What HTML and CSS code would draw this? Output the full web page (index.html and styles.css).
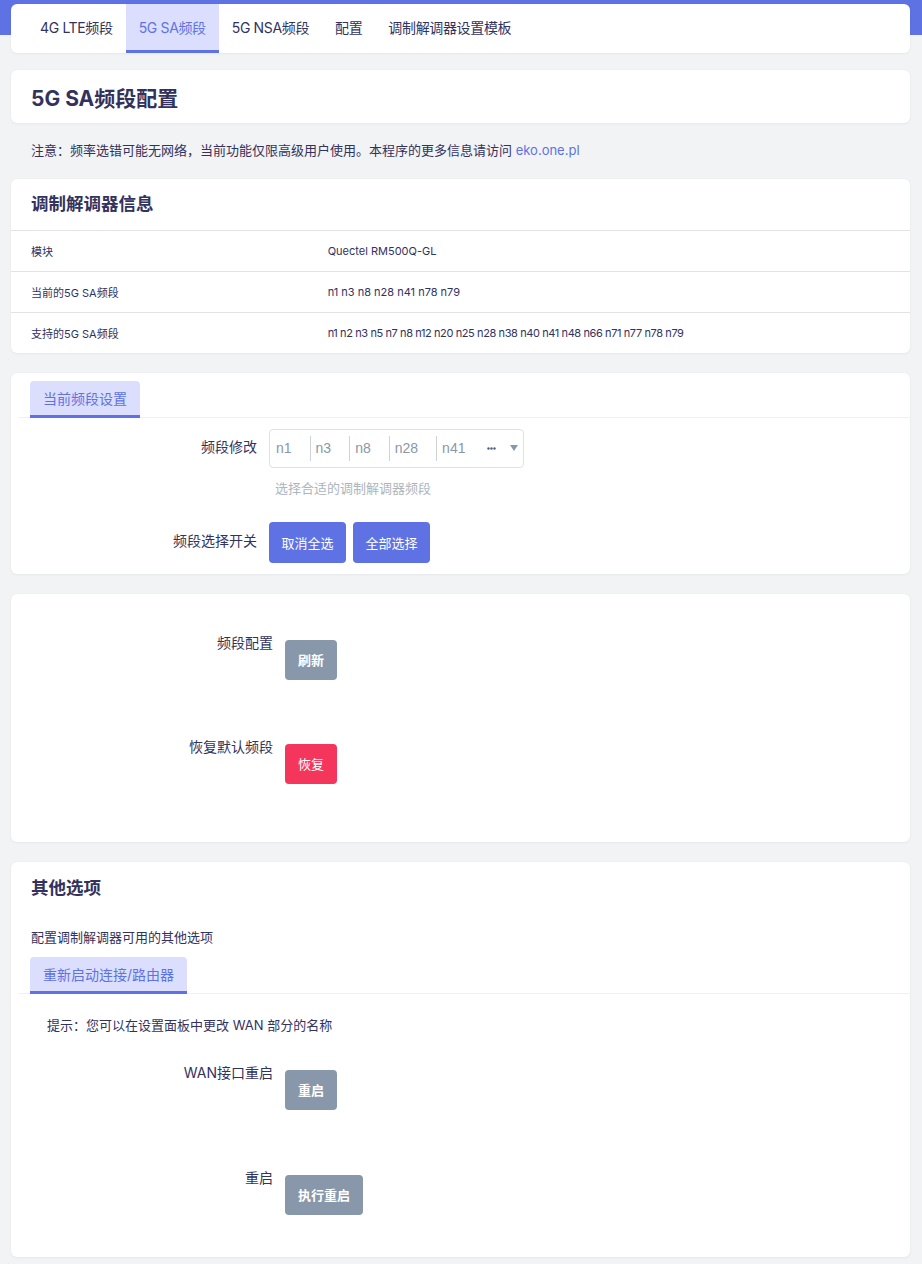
FILE: index.html
```html
<!DOCTYPE html>
<html lang="zh-CN">
<head>
<meta charset="utf-8">
<title>5G SA频段配置</title>
<link rel="stylesheet" href="styles.css">
</head>
<body>
<div class="topband"></div>
<div class="page">
  <nav class="card tabs">
    <a class="tab">4G LTE频段</a>
    <a class="tab active">5G SA频段</a>
    <a class="tab">5G NSA频段</a>
    <a class="tab">配置</a>
    <a class="tab">调制解调器设置模板</a>
  </nav>

  <div class="card titlecard">
    <h2 class="pagetitle">5G SA频段配置</h2>
  </div>

  <p class="note">注意：频率选错可能无网络，当前功能仅限高级用户使用。本程序的更多信息请访问 <a class="link">eko.one.pl</a></p>

  <div class="card infocard">
    <h3 class="cardtitle">调制解调器信息</h3>
    <table class="info">
      <tr><td class="k">模块</td><td class="v">Quectel RM500Q-GL</td></tr>
      <tr><td class="k">当前的5G SA频段</td><td class="v">n1 n3 n8 n28 n41 n78 n79</td></tr>
      <tr class="last"><td class="k">支持的5G SA频段</td><td class="v tight">n1 n2 n3 n5 n7 n8 n12 n20 n25 n28 n38 n40 n41 n48 n66 n71 n77 n78 n79</td></tr>
    </table>
  </div>

  <div class="card bandcard">
    <div class="subtabs"><span class="subtab">当前频段设置</span></div>
    <div class="frow">
      <div class="flabel">频段修改</div>
      <div class="field">
        <div class="select">
          <span class="chip first">n1</span><span class="chip">n3</span><span class="chip">n8</span><span class="chip">n28</span><span class="chip">n41</span>
          <svg class="more" width="9" height="3" viewBox="0 0 9 3"><circle cx="1.5" cy="1.5" r="1.2"/><circle cx="4.5" cy="1.5" r="1.2"/><circle cx="7.5" cy="1.5" r="1.2"/></svg>
          <svg class="caret" width="8" height="6" viewBox="0 0 8 6"><path d="M0 0H8L4 6Z"/></svg>
        </div>
        <div class="help">选择合适的调制解调器频段</div>
      </div>
    </div>
    <div class="frow sw">
      <div class="flabel">频段选择开关</div>
      <div class="field btns">
        <button class="btn blue">取消全选</button>
        <button class="btn blue">全部选择</button>
      </div>
    </div>
  </div>

  <div class="card actioncard">
    <div class="arow">
      <div class="alabel">频段配置</div>
      <div class="afield"><button class="btn gray">刷新</button></div>
    </div>
    <div class="arow">
      <div class="alabel">恢复默认频段</div>
      <div class="afield"><button class="btn red">恢复</button></div>
    </div>
  </div>

  <div class="card othercard">
    <h3 class="cardtitle">其他选项</h3>
    <p class="desc">配置调制解调器可用的其他选项</p>
    <div class="subtabs"><span class="subtab">重新启动连接/路由器</span></div>
    <p class="hint">提示：您可以在设置面板中更改 WAN 部分的名称</p>
    <div class="arow">
      <div class="alabel">WAN接口重启</div>
      <div class="afield"><button class="btn gray">重启</button></div>
    </div>
    <div class="arow">
      <div class="alabel">重启</div>
      <div class="afield"><button class="btn gray">执行重启</button></div>
    </div>
  </div>
</div>
</body>
</html>
```

FILE: styles.css
```css
* { box-sizing: border-box; }
html, body { margin: 0; padding: 0; }
body {
  background: #f2f3f5;
  font-family: Inter, "Noto Sans CJK SC", sans-serif;
  font-size: 14px;
  color: #32325d;
  position: relative;
}
.topband {
  position: absolute;
  left: 0; top: 0; right: 0;
  height: 35px;
  background: #5e72e4;
}
.page {
  position: relative;
  padding: 4px 12px 6px 11px;
}
.card {
  background: #fff;
  border-radius: 6px;
  box-shadow: 0 0 2px rgba(0,0,0,0.04), 0 1px 3px rgba(50,50,93,0.05);
}
.tabs {
  display: flex;
  height: 49px;
  padding-left: 16px;
}
.tab {
  display: flex;
  align-items: center;
  padding: 0 13px;
  font-size: 14px;
  letter-spacing: -0.35px;
  color: #32325d;
  border-bottom: 3px solid transparent;
}
.tab.active {
  background: #dbdffd;
  color: #5e72e4;
  border-bottom-color: #5e72e4;
}
.titlecard {
  margin-top: 17px;
  height: 53px;
  display: flex;
  align-items: center;
  padding: 0 20px;
}
.pagetitle {
  margin: 0;
  font-size: 21px;
  font-weight: 700;
  color: #32325d;
}
.note {
  margin: 0;
  padding: 17px 20px 0;
  height: 56px;
  line-height: 20px;
  font-size: 13px;
}
.link { color: #5e72e4; }
.cardtitle {
  margin: 0;
  font-size: 17.5px;
  font-weight: 700;
  line-height: 24px;
  color: #32325d;
}
.infocard .cardtitle {
  padding: 13px 20px 14px;
}
.info {
  width: 100%;
  border-collapse: collapse;
}
.info td {
  border-top: 1px solid #e1e3e6;
  height: 41px;
  padding: 0 20px;
  font-size: 11px;
}
.info tr.last td { height: 40px; }
.info td.k { width: 33%; }
.info td.tight { letter-spacing: -0.4px; }
.bandcard {
  margin-top: 20px;
  padding: 8px 0 11px 8px;
}
.subtabs {
  border-bottom: 1px solid #eef0f3;
  display: flex;
  padding-left: 11px;
}
.subtab {
  display: inline-flex;
  align-items: center;
  height: 37px;
  padding: 0 13px;
  background: #dbdffd;
  color: #5e72e4;
  font-size: 14px;
  border-radius: 4px 4px 0 0;
  border-bottom: 3px solid #5e72e4;
  margin-bottom: -1px;
}
.frow {
  display: grid;
  grid-template-columns: 238px 1fr;
  column-gap: 12px;
  margin-top: 11px;
}
.frow.sw { margin-top: 24px; }
.flabel {
  text-align: right;
  line-height: 20px;
  font-size: 14px;
  padding-top: 8px;
}
.frow.sw .flabel { padding-top: 9px; }
.select {
  width: 255px;
  height: 39px;
  border: 1px solid #dee2e6;
  border-radius: 4px;
  display: flex;
  align-items: center;
  padding-left: 6px;
  font-family: "Liberation Sans", Arial, sans-serif;
  font-size: 14px;
  color: #8898aa;
}
.chip {
  display: inline-flex;
  align-items: center;
  height: 25px;
  border-left: 1px solid #cfd3d8;
  padding: 0 18px 0 5px;
}
.chip.first { border-left: 0; padding-left: 0; }
.more {
  margin-left: 4px;
  fill: #525f7f;
}
.caret {
  margin-left: 14px;
  fill: #8898aa;
}
.help {
  margin-top: 10px;
  padding-left: 6px;
  color: #adb5bd;
  font-size: 13px;
  line-height: 20px;
}
.btns { display: flex; gap: 7px; }
.btn {
  border: 0;
  border-radius: 4px;
  color: #fff;
  font-family: Inter, "Noto Sans CJK SC", sans-serif;
  font-size: 13px;
  height: 40px;
  padding: 0 13px;
  white-space: nowrap;
  cursor: pointer;
}
.btn.blue { background: #5e72e4; height: 41px; padding: 0 12px; min-width: 77px; }
.btn.gray { background: #8898aa; font-weight: 700; }
.btn.red { background: #f5365c; }
.actioncard {
  margin-top: 20px;
  padding: 39px 0 58px;
}
.arow {
  display: grid;
  grid-template-columns: 262px 1fr;
  column-gap: 12px;
}
.arow + .arow { margin-top: 57px; }
.alabel {
  text-align: right;
  line-height: 20px;
  font-size: 14px;
}
.afield { padding-top: 7px; }
.othercard {
  margin-top: 20px;
  padding: 14px 0 42px;
}
.othercard .cardtitle { padding: 0 20px; }
.desc {
  margin: 0;
  padding: 27px 20px 0;
  line-height: 20px;
  font-size: 13px;
}
.othercard .subtabs {
  margin: 10px 0 0 8px;
}
.hint {
  margin: 0;
  padding: 21px 36px 0;
  line-height: 20px;
  font-size: 13px;
}
.othercard .arow { margin-top: 28px; }
.othercard .arow + .arow { margin-top: 58px; }
```
